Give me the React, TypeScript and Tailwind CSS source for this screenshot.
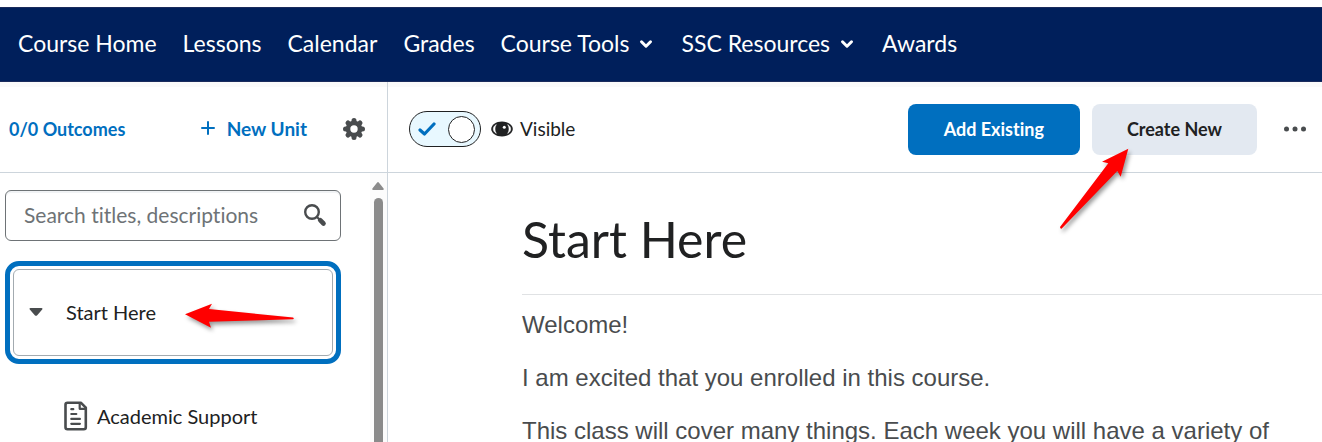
import React, { useState } from "react";
import { ChevronDown } from "lucide-react";

const navItems = [
  { label: "Course Home" },
  { label: "Lessons" },
  { label: "Calendar" },
  { label: "Grades" },
  { label: "Course Tools", menu: true },
  { label: "SSC Resources", menu: true },
  { label: "Awards" },
];

const GearIcon = () => (
  <svg width="22" height="22" viewBox="0 0 22 22" fill="none" stroke="#494c4e">
    <circle cx="11" cy="11" r="6" strokeWidth="4.6" />
    <g strokeWidth="5" strokeLinecap="round">
      <path d="M11 2.5v1M11 18.5v1M2.5 11h1M18.5 11h1M5 5l.7.7M16.3 16.3l.7.7M17 5l-.7.7M5.7 16.3l-.7.7" />
    </g>
  </svg>
);

const SearchIcon = () => (
  <svg width="24" height="24" viewBox="0 0 24 24" fill="none" stroke="#494c4e">
    <circle cx="9" cy="9" r="6.8" strokeWidth="2.4" />
    <path d="M13.5 13.5l3 3" strokeWidth="2.2" />
    <path d="M17.2 17.2l3.3 3.3" strokeWidth="4.6" strokeLinecap="round" />
  </svg>
);

const EyeIcon = () => (
  <svg width="22" height="16" viewBox="0 0 22 16">
    <path d="M11 .5C5 .5.2 4 .2 8S5 15.500 11 15.500 21.800 12 21.800 8 17 .5 11 .5z" fill="#202122" />
    <path d="M5.300 3.600C3.300 4.800 2.300 6.300 2.300 8s1 3.200 3 4.400C4.400 11 4 9.600 4 8s.4-3 1.300-4.400zM16.700 3.600c2 1.200 3 2.700 3 4.400s-1 3.200-3 4.400C17.600 11 18 9.600 18 8s-.4-3-1.300-4.400z" fill="#fff" stroke="#fff" strokeWidth=".5" />
    <circle cx="13.300" cy="6.300" r="1.500" fill="#fff" />
  </svg>
);

const PageIcon = () => (
  <svg width="24" height="30" viewBox="0 0 24 30" fill="none" stroke="#494c4e" strokeWidth="2.600" strokeLinecap="round" strokeLinejoin="round">
    <path d="M3.500 1.700h13.300l5 5v19.600c0 1.200-.8 2-2 2H3.500c-1.200 0-2-.8-2-2V3.700c0-1.200.8-2 2-2z" />
    <path d="M15.700 2v5.800h5.800" strokeWidth="2.200" />
    <path d="M7.300 8.200h2M7.300 13h5M7.300 17.900h8.600M7.300 22.800h8.600" strokeWidth="2.200" />
  </svg>
);

const Shadow = "drop-shadow-[2px_3px_2px_rgba(0,0,0,0.4)]";

const App = () => {
  const [visible, setVisible] = useState(true);

  return (
    <div className="flex h-screen flex-col overflow-hidden bg-white pt-[7px] font-['Lato',sans-serif] text-[#202122] [font-variant-ligatures:none]">
      <nav className="flex h-[75px] shrink-0 items-center gap-[26px] border-y border-[#1a2b5c] bg-[#001f5b] px-[18px] pb-[2px] text-[23px] text-white">
        {navItems.map((item) =>
          item.menu ? (
            <button key={item.label} className="flex items-center gap-2 whitespace-nowrap">
              {item.label}
              <ChevronDown size={18} strokeWidth={4} />
            </button>
          ) : (
            <a key={item.label} href="#" className="whitespace-nowrap">
              {item.label}
            </a>
          )
        )}
      </nav>

      <div className="flex min-h-0 flex-1">
        <aside className="flex w-[388px] shrink-0 flex-col border-r border-[#cdd5dc]">
          <div className="flex h-[91px] shrink-0 items-center border-b border-[#cdd5dc] border-t-[5px] border-t-[#fafafa] pr-[22px] pb-[2px] pl-[9px] text-lg font-bold text-[#006fbf]">
            <a href="#" className="flex-1">0/0 Outcomes</a>
            <button className="flex items-center gap-3 text-[19px]">
              <svg width="14" height="14" viewBox="0 0 14 14" stroke="#006fbf" strokeWidth="2" strokeLinecap="round">
                <path d="M7 1v12M1 7h12" />
              </svg>
              New Unit
            </button>
            <button aria-label="Settings" className="ml-9">
              <GearIcon />
            </button>
          </div>

          <div className="flex min-h-0 flex-1">
            <div className="flex-1 pt-[17px] pr-[29px] pl-[5px]">
              <label className="flex h-[51px] items-center rounded-md border border-[#6e7376] pr-[13px] pb-[2px] pl-[18px] shadow-[inset_0_2px_0_#f1f3f5]">
                <input
                  type="text"
                  aria-label="Search titles, descriptions"
                  placeholder="Search titles, descriptions"
                  className="min-w-0 flex-1 bg-transparent text-[21px] outline-none placeholder:text-[#6e7376]"
                />
                <SearchIcon />
              </label>

              <div className="relative mt-5 rounded-[14px] border-[5px] border-[#006fbf] p-[3px]">
                <button className="flex h-[87px] w-full items-center rounded-md border border-[#a3abb0] pb-[2px] pl-[15px] text-xl">
                  <svg width="14" height="8" viewBox="0 0 14 8" fill="#494c4e">
                    <path d="M1.500 0h11c1 0 1.300 1 .7 1.600L8 7.400c-.6.6-1.400.6-2 0L.8 1.600C.2 1 .5 0 1.500 0z" />
                  </svg>
                  <span className="ml-[23px]">Start Here</span>
                </button>
                <svg className={`absolute top-9 left-[175px] ${Shadow}`} width="112" height="28" viewBox="0 0 112 28" fill="#f00">
                  <path d="M0 12.300L27 1.700l-3 5.300 84 8.500q1.500.9 0 1.800l-84 2.400 2 6z" />
                </svg>
              </div>

              <a href="#" className="mt-[37px] flex items-center gap-[9px] pl-[59px] text-xl">
                <PageIcon />
                Academic Support
              </a>
            </div>

            <div className="flex w-[17px] flex-col items-center bg-[#fcfcfc] pt-[9px] pr-px">
              <svg width="12" height="8" viewBox="0 0 12 8" fill="#8b8b8b">
                <path d="M5.200.6q.8-1 1.600 0l4.800 6q.6 1.400-.8 1.400H1.200Q-.2 8 .4 6.600z" />
              </svg>
              <div className="mt-2 w-[9px] flex-1 rounded-t-full bg-[#8b8b8b]" />
            </div>
          </div>
        </aside>

        <main className="min-w-0 flex-1">
          <div className="flex h-[91px] items-center border-b border-[#cdd5dc] border-t-[5px] border-t-[#fafafa] pr-[15px] pb-px pl-[21px]">
            <label className="flex items-center gap-[10px] text-[19px]">
              <input type="checkbox" role="switch" className="sr-only" checked={visible} onChange={() => setVisible(!visible)} />
              <span className="flex h-9 w-[72px] items-center justify-between rounded-full border border-[#202122] bg-[#e8f8ff] pr-[5px] pl-2">
                <svg width="18" height="14" viewBox="0 0 18 14" fill="none" stroke="#006fbf" strokeWidth="3.200" strokeLinecap="round" strokeLinejoin="round">
                  <path d="M2 8l4.500 4L16 2" />
                </svg>
                <span className="h-[27px] w-[27px] rounded-full border border-[#202122] bg-white" />
              </span>
              <span className="flex items-center gap-[7px]">
                <EyeIcon />
                Visible
              </span>
            </label>

            <div className="ml-auto flex items-center gap-3 text-lg font-bold">
              <button className="h-[51px] rounded-lg bg-[#006fbf] px-9 text-white">Add Existing</button>
              <div className="relative">
                <button className="h-[51px] rounded-lg bg-[#e3e9f1] px-[35px]">Create New</button>
                <svg className={`absolute top-10 -left-9 ${Shadow}`} width="80" height="92" viewBox="0 0 80 92" fill="#f00">
                  <path d="M72.300 4.700L46 17.700l6.300 1.600L4 83q.2 1.900 1.500 1.700L61.300 27l3.400 5.700z" />
                </svg>
              </div>
              <button aria-label="More actions" className="ml-[14px]">
                <svg width="24" height="6" viewBox="0 0 24 6" fill="#494c4e">
                  <circle cx="3.500" cy="3" r="2.500" />
                  <circle cx="12" cy="3" r="2.500" />
                  <circle cx="20.500" cy="3" r="2.500" />
                </svg>
              </button>
            </div>
          </div>

          <div className="pl-[134px]">
            <h1 className="border-b border-[#e0e2e4] pt-[37px] pb-[26px] text-[50px] leading-[58px]">Start Here</h1>
            <div className="space-y-[17px] pt-3 font-['Liberation_Sans',sans-serif] text-2xl leading-9 text-[#494c4e]">
              <p>Welcome!</p>
              <p>I am excited that you enrolled in this course.</p>
              <p>This class will cover many things. Each week you will have a variety of</p>
            </div>
          </div>
        </main>
      </div>
    </div>
  );
};

export default App;
